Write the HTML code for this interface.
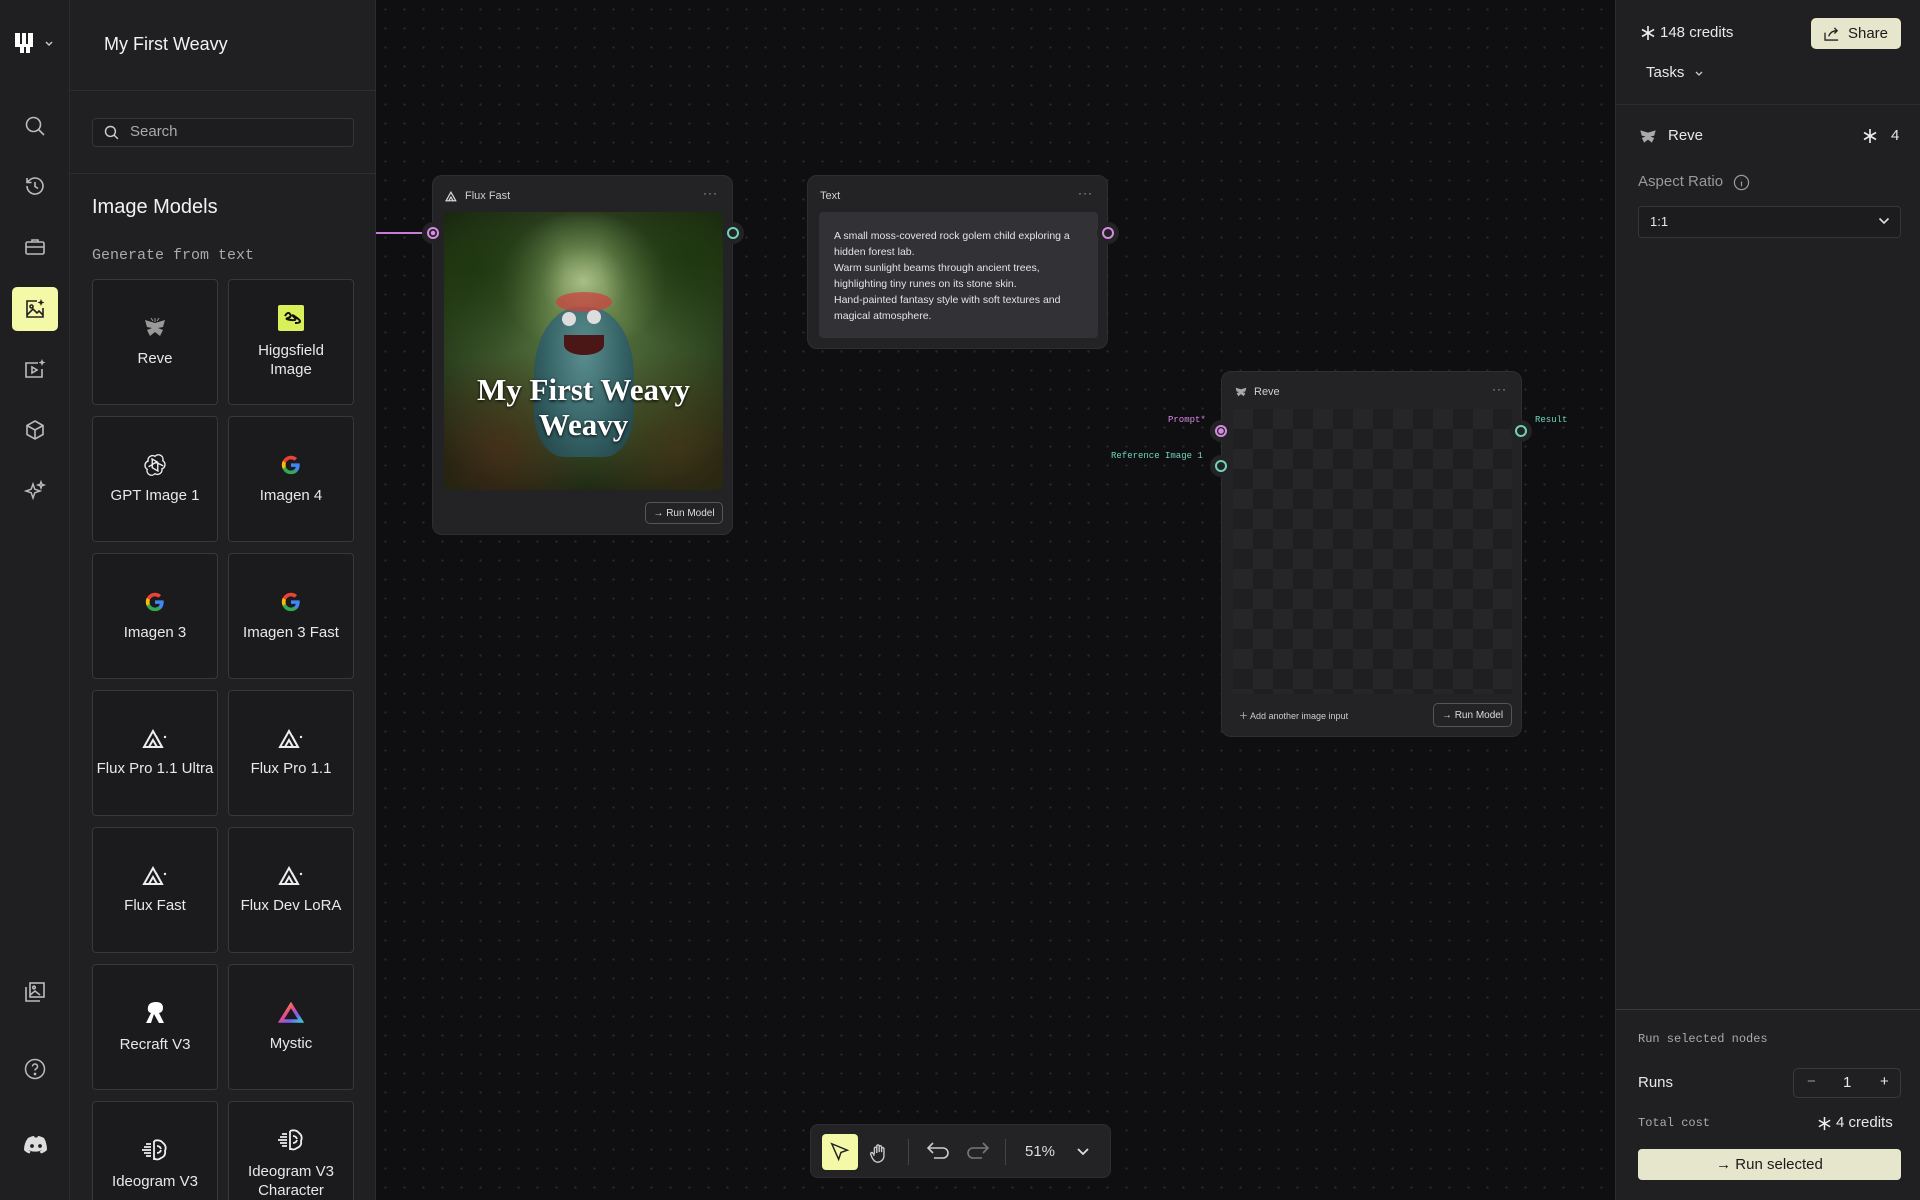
<!DOCTYPE html>
<html style="overflow:hidden;height:1200px"><head><meta charset="utf-8">
<style>
*{box-sizing:border-box;margin:0;padding:0}
html,body{width:1920px;height:1200px;overflow:hidden}
body{background:#0f0f12;font-family:"Liberation Sans",sans-serif;color:#e8e8e8;position:relative}
.abs{position:absolute}
.mono{font-family:"Liberation Mono",monospace}
#rail{left:0;top:0;width:70px;height:1200px;background:#1f1f22;border-right:1px solid #2c2c30;overflow:hidden}
#side{left:70px;top:0;width:306px;height:1200px;background:#202023;border-right:1px solid #2c2c30;overflow:hidden}
#canvas{left:376px;top:0;width:1239px;height:1200px;overflow:hidden;background-color:#0f0f12;background-image:radial-gradient(circle,#2a2a30 1px,transparent 1.3px);background-size:19px 19px}
#right{left:1615px;top:0;width:305px;height:1200px;background:#202023;border-left:1px solid #2c2c30;overflow:hidden}
.ri{position:absolute;left:23px;width:24px;height:24px}
.card{position:absolute;width:126px;height:126px;border:1px solid #38383c;border-radius:4px;background:#1b1b1e;display:flex;flex-direction:column;align-items:center;justify-content:center;font-size:15px;color:#e8e8e8;text-align:center;line-height:19px}
.card svg{margin-bottom:10px}
.node{position:absolute;background:#232326;border:1px solid #2e2e32;border-radius:10px}
.nh{position:absolute;top:14px;left:12px;font-size:11px;color:#cfcfcf;display:flex;align-items:center;gap:6px}
.dots{position:absolute;top:10px;right:14px;font-size:12px;color:#aaa;letter-spacing:1px}
.port{position:absolute;width:22px;height:22px;border-radius:50%;background:#232326}
.port i{position:absolute;left:5px;top:5px;width:12px;height:12px;border-radius:50%;border:2px solid}
.btn{position:absolute;border:1px solid #555;border-radius:5px;font-size:10px;color:#ddd;display:flex;align-items:center;justify-content:center}
</style></head><body>

<div id="rail" class="abs">
  <svg class="abs" style="left:14px;top:32px" width="40" height="22" viewBox="0 0 40 22"><path d="M1 1h5v11h2V1h4v11h2V1h5v14h-3v6h-4v-6h-2v6h-4v-6H1z" fill="#fff"/><path d="M32 10l3 3 3-3" stroke="#ccc" stroke-width="1.4" fill="none"/></svg>
  <svg class="ri" style="top:114px" viewBox="0 0 24 24" fill="none" stroke="#bbb" stroke-width="1.6"><circle cx="10.5" cy="10.5" r="7"/><path d="M15.5 15.5L21 21"/></svg>
  <svg class="ri" style="top:174px" viewBox="0 0 24 24" fill="none" stroke="#bbb" stroke-width="1.6"><path d="M4 12a8 8 0 1 0 2.5-5.8L4 8.5M4 4v4.5h4.5M12 8v4.5l3 2"/></svg>
  <svg class="ri" style="top:235px" viewBox="0 0 24 24" fill="none" stroke="#bbb" stroke-width="1.6"><rect x="3" y="7" width="18" height="12" rx="1.5"/><path d="M9 7V5h6v2M3 12h18"/></svg>
  <div class="abs" style="left:12px;top:287px;width:46px;height:44px;background:#f4f9a8;border-radius:5px"></div>
  <svg class="ri" style="top:297px" viewBox="0 0 24 24" fill="none" stroke="#222" stroke-width="1.6"><path d="M14 4H4v16h16V11"/><circle cx="8.5" cy="9.5" r="1.5"/><path d="M4 18l6-6 4 4 2-2 4 4"/><path d="M18 2l1 2.5 2.5 1-2.5 1-1 2.5-1-2.5-2.5-1 2.5-1z" fill="#222" stroke="none"/></svg>
  <svg class="ri" style="top:357px" viewBox="0 0 24 24" fill="none" stroke="#bbb" stroke-width="1.6"><path d="M15 6H3v14h16v-8"/><path d="M9 10v6l5-3z"/><path d="M19 2l1 2.5 2.5 1-2.5 1-1 2.5-1-2.5-2.5-1 2.5-1z" fill="#bbb" stroke="none"/></svg>
  <svg class="ri" style="top:418px" viewBox="0 0 24 24" fill="none" stroke="#bbb" stroke-width="1.6"><path d="M12 3l8 4.5v9L12 21l-8-4.5v-9zM4 7.5l8 4.5 8-4.5M12 12v9"/></svg>
  <svg class="ri" style="top:479px" viewBox="0 0 24 24" fill="none" stroke="#bbb" stroke-width="1.5"><path d="M10 5l1.8 5.2L17 12l-5.2 1.8L10 19l-1.8-5.2L3 12l5.2-1.8zM18 3l.8 2.2L21 6l-2.2.8L18 9l-.8-2.2L15 6l2.2-.8z"/></svg>
  <svg class="ri" style="top:980px" viewBox="0 0 24 24" fill="none" stroke="#bbb" stroke-width="1.6"><rect x="7" y="3" width="14" height="14"/><path d="M3 7v14h14"/><circle cx="11" cy="7.5" r="1.3"/><path d="M7 15l5-4 5 4"/></svg>
  <svg class="ri" style="top:1057px" viewBox="0 0 24 24" fill="none" stroke="#bbb" stroke-width="1.5"><circle cx="12" cy="12" r="9.5"/><path d="M9.5 9.5a2.5 2.5 0 1 1 3.5 2.3c-.7.3-1 .9-1 1.7"/><circle cx="12" cy="17" r=".6" fill="#bbb"/></svg>
  <svg class="ri" style="top:1133px;width:26px" viewBox="0 0 26 20"><path d="M5 3q4-2 6-2l.8 1.5h2.4L15 1q2 0 6 2 3 5 3 12-2.5 2.5-6 3.5l-1.3-2q1.5-.6 2.5-1.4-7 3-14 0 1 .8 2.5 1.4L6.4 18.5Q3 17.5 1 15 1 8 5 3z" fill="#ddd"/><circle cx="9" cy="11" r="1.9" fill="#1f1f22"/><circle cx="17" cy="11" r="1.9" fill="#1f1f22"/></svg>
</div>

<div id="side" class="abs">
  <div class="abs" style="left:34px;top:34px;font-size:18px;color:#f2f2f2">My First Weavy</div>
  <div class="abs" style="left:0;top:90px;width:306px;border-top:1px solid #2e2e32"></div>
  <div class="abs" style="left:22px;top:118px;width:262px;height:29px;border:1px solid #35353a;border-radius:4px;background:#1d1d20"></div>
  <svg class="abs" style="left:33px;top:124px" width="17" height="17" viewBox="0 0 24 24" fill="none" stroke="#ccc" stroke-width="2"><circle cx="10.5" cy="10.5" r="7"/><path d="M15.5 15.5L21 21"/></svg>
  <div class="abs" style="left:60px;top:123px;font-size:15px;color:#aaa">Search</div>
  <div class="abs" style="left:0;top:173px;width:306px;border-top:1px solid #2e2e32"></div>
  <div class="abs" style="left:22px;top:196px;font-size:20px;color:#f2f2f2">Image Models</div>
  <div class="abs mono" style="left:22px;top:247px;font-size:15px;color:#aaa">Generate from text</div>

  <div class="card" style="left:22px;top:279px"><svg width="26" height="22" viewBox="0 0 26 22"><path d="M13 6L3 3l2 7 5 1-5 2 3 6 5-4 5 4 3-6-5-2 5-1 2-7z" fill="#999"/><path d="M9 1l2 3M17 1l-2 3M13 1v4" stroke="#999" stroke-width="1"/></svg>Reve</div>
  <div class="card" style="left:158px;top:279px"><svg width="26" height="26" viewBox="0 0 26 26"><rect width="26" height="26" rx="2" fill="#d9f05a"/><path d="M7 11q3-5 5-2t-2 4 3 2 3-3 3 1-2 5" stroke="#111" stroke-width="2" fill="none"/></svg>Higgsfield<br>Image</div>

  <div class="card" style="left:22px;top:416px"><svg width="22" height="22" viewBox="0 0 24 24" fill="none" stroke="#eee" stroke-width="1.5"><path d="M12 2.5a5 5 0 0 1 8.5 4.8 5 5 0 0 1-1 9A5 5 0 0 1 12 21.5a5 5 0 0 1-8.5-4.8 5 5 0 0 1 1-9A5 5 0 0 1 12 2.5zM9 5v10l7 4M15 19V9L8 5M5 14l8-5 8 4"/></svg>GPT Image 1</div>
  <div class="card" style="left:158px;top:416px"><svg width="22" height="22" viewBox="0 0 24 24"><path d="M21.5 12.2c0-.7-.1-1.4-.2-2H12v3.9h5.3a4.6 4.6 0 0 1-2 3v2.5h3.2c1.9-1.7 3-4.3 3-7.4z" fill="#4285f4"/><path d="M12 22c2.7 0 5-.9 6.6-2.4l-3.2-2.5c-.9.6-2 1-3.4 1-2.6 0-4.8-1.8-5.6-4.1H3.1v2.6A10 10 0 0 0 12 22z" fill="#34a853"/><path d="M6.4 14c-.2-.6-.3-1.3-.3-2s.1-1.4.3-2V7.4H3.1a10 10 0 0 0 0 9z" fill="#fbbc05"/><path d="M12 5.9c1.5 0 2.8.5 3.8 1.5l2.9-2.9A10 10 0 0 0 3.1 7.4L6.4 10C7.2 7.7 9.4 5.9 12 5.9z" fill="#ea4335"/></svg>Imagen 4</div>

  <div class="card" style="left:22px;top:553px"><svg width="22" height="22" viewBox="0 0 24 24"><path d="M21.5 12.2c0-.7-.1-1.4-.2-2H12v3.9h5.3a4.6 4.6 0 0 1-2 3v2.5h3.2c1.9-1.7 3-4.3 3-7.4z" fill="#4285f4"/><path d="M12 22c2.7 0 5-.9 6.6-2.4l-3.2-2.5c-.9.6-2 1-3.4 1-2.6 0-4.8-1.8-5.6-4.1H3.1v2.6A10 10 0 0 0 12 22z" fill="#34a853"/><path d="M6.4 14c-.2-.6-.3-1.3-.3-2s.1-1.4.3-2V7.4H3.1a10 10 0 0 0 0 9z" fill="#fbbc05"/><path d="M12 5.9c1.5 0 2.8.5 3.8 1.5l2.9-2.9A10 10 0 0 0 3.1 7.4L6.4 10C7.2 7.7 9.4 5.9 12 5.9z" fill="#ea4335"/></svg>Imagen 3</div>
  <div class="card" style="left:158px;top:553px"><svg width="22" height="22" viewBox="0 0 24 24"><path d="M21.5 12.2c0-.7-.1-1.4-.2-2H12v3.9h5.3a4.6 4.6 0 0 1-2 3v2.5h3.2c1.9-1.7 3-4.3 3-7.4z" fill="#4285f4"/><path d="M12 22c2.7 0 5-.9 6.6-2.4l-3.2-2.5c-.9.6-2 1-3.4 1-2.6 0-4.8-1.8-5.6-4.1H3.1v2.6A10 10 0 0 0 12 22z" fill="#34a853"/><path d="M6.4 14c-.2-.6-.3-1.3-.3-2s.1-1.4.3-2V7.4H3.1a10 10 0 0 0 0 9z" fill="#fbbc05"/><path d="M12 5.9c1.5 0 2.8.5 3.8 1.5l2.9-2.9A10 10 0 0 0 3.1 7.4L6.4 10C7.2 7.7 9.4 5.9 12 5.9z" fill="#ea4335"/></svg>Imagen 3 Fast</div>

  <div class="card" style="left:22px;top:690px"><svg width="26" height="20" viewBox="0 0 26 20" fill="none" stroke="#eee" stroke-width="2"><path d="M2 18L11 2l9 16zM7 18l4-7 4 7M14 7l6 11"/><circle cx="23" cy="8" r="1.2" fill="#eee" stroke="none"/></svg>Flux Pro 1.1 Ultra</div>
  <div class="card" style="left:158px;top:690px"><svg width="26" height="20" viewBox="0 0 26 20" fill="none" stroke="#eee" stroke-width="2"><path d="M2 18L11 2l9 16zM7 18l4-7 4 7M14 7l6 11"/><circle cx="23" cy="8" r="1.2" fill="#eee" stroke="none"/></svg>Flux Pro 1.1</div>

  <div class="card" style="left:22px;top:827px"><svg width="26" height="20" viewBox="0 0 26 20" fill="none" stroke="#eee" stroke-width="2"><path d="M2 18L11 2l9 16zM7 18l4-7 4 7M14 7l6 11"/><circle cx="23" cy="8" r="1.2" fill="#eee" stroke="none"/></svg>Flux Fast</div>
  <div class="card" style="left:158px;top:827px"><svg width="26" height="20" viewBox="0 0 26 20" fill="none" stroke="#eee" stroke-width="2"><path d="M2 18L11 2l9 16zM7 18l4-7 4 7M14 7l6 11"/><circle cx="23" cy="8" r="1.2" fill="#eee" stroke="none"/></svg>Flux Dev LoRA</div>

  <div class="card" style="left:22px;top:964px"><svg width="22" height="24" viewBox="0 0 22 24"><path d="M2 22L7 12Q3 11 4 6q1-5 8-5 7 0 7 6 0 4-4 5l5 10h-5l-5-9-3 9z" fill="#fff"/></svg>Recraft V3</div>
  <div class="card" style="left:158px;top:964px"><svg width="26" height="22" viewBox="0 0 26 22"><defs><linearGradient id="mg" x1="0" x2="1" y1="0" y2="1"><stop offset="0" stop-color="#f5a623"/><stop offset=".4" stop-color="#e94b8a"/><stop offset=".7" stop-color="#7b5cf5"/><stop offset="1" stop-color="#3ec1d3"/></linearGradient></defs><path d="M13 3L23 19H3z" fill="none" stroke="url(#mg)" stroke-width="3.5"/></svg>Mystic</div>

  <div class="card" style="left:22px;top:1101px;height:110px;justify-content:flex-start;padding-top:36px"><svg width="26" height="24" viewBox="0 0 26 24" fill="none" stroke="#eee" stroke-width="1.8"><path d="M12 3q6-2 9 2 4 3 2 8 1 5-4 7-4 3-7 0M12 3v19M15 8q3 0 4 3M15 15q3 0 4-3M2 9h7M0 12h9M2 15h7M4 6h5M4 18h5"/></svg>Ideogram V3</div>
  <div class="card" style="left:158px;top:1101px;height:110px;justify-content:flex-start;padding-top:26px"><svg width="26" height="24" viewBox="0 0 26 24" fill="none" stroke="#eee" stroke-width="1.8"><path d="M12 3q6-2 9 2 4 3 2 8 1 5-4 7-4 3-7 0M12 3v19M15 8q3 0 4 3M15 15q3 0 4-3M2 9h7M0 12h9M2 15h7M4 6h5M4 18h5"/></svg>Ideogram V3<br>Character</div>
</div>

<div id="canvas" class="abs">
  <div class="abs" style="left:0;top:232px;width:56px;height:1.5px;background:#c77dd8"></div>

  <div class="node" style="left:56px;top:175px;width:301px;height:360px">
    <div class="nh"><svg width="14" height="11" viewBox="0 0 26 20" fill="none" stroke="#ddd" stroke-width="2.2"><path d="M2 18L11 2l9 16zM7 18l4-7 4 7M14 7l6 11"/></svg>Flux Fast</div>
    <div class="dots">···</div>
    <div class="abs" style="left:11px;top:36px;width:279px;height:278px;border-radius:3px;overflow:hidden;background:radial-gradient(ellipse 35% 30% at 50% 25%,#a9bf86 0%,rgba(130,160,95,.5) 45%,transparent 85%),radial-gradient(ellipse 70% 60% at 50% 45%,#5d7a42,#324a24 60%,#18210f 100%)">
      <div class="abs" style="left:0;top:0;width:279px;height:278px;background:radial-gradient(circle at 10% 20%,rgba(30,55,15,.9) 0,transparent 28%),radial-gradient(circle at 90% 15%,rgba(30,55,15,.9) 0,transparent 28%),radial-gradient(circle at 20% 85%,rgba(80,45,25,.7) 0,transparent 30%),radial-gradient(circle at 85% 85%,rgba(80,55,25,.6) 0,transparent 30%)"></div>
      <div class="abs" style="left:90px;top:95px;width:100px;height:150px;border-radius:45% 45% 30% 30%;background:radial-gradient(ellipse at 50% 30%,#5a8e8e,#325e62 60%,#1f3f42)"></div>
      <div class="abs" style="left:112px;top:80px;width:56px;height:20px;border-radius:50%;background:#c8443f;opacity:.75"></div>
      <div class="abs" style="left:118px;top:100px;width:14px;height:14px;border-radius:50%;background:#ddd"></div>
      <div class="abs" style="left:143px;top:98px;width:14px;height:14px;border-radius:50%;background:#ddd"></div>
      <div class="abs" style="left:120px;top:123px;width:40px;height:20px;border-radius:0 0 50% 50%;background:#4a1616"></div>
      <div class="abs" style="left:0;top:160px;width:279px;text-align:center;font-family:'Liberation Serif',serif;font-weight:bold;font-size:31px;line-height:35px;color:#fff;text-shadow:0 1px 3px #000">My First Weavy<br>Weavy</div>
    </div>
    <div class="btn" style="left:212px;top:326px;width:78px;height:22px">→ Run Model</div>
  </div>
  <div class="port" style="left:46px;top:222px"><i style="border-color:#d48be0;background:radial-gradient(circle,#d48be0 2px,transparent 2.5px)"></i></div>
  <div class="port" style="left:346px;top:222px"><i style="border-color:#6fd3b8"></i></div>

  <div class="node" style="left:431px;top:175px;width:301px;height:174px">
    <div class="nh">Text</div>
    <div class="dots">···</div>
    <div class="abs" style="left:11px;top:36px;width:279px;height:126px;border-radius:4px;background:#323236;padding:16px 15px;font-size:10.5px;line-height:16px;color:#e4e4e4">A small moss-covered rock golem child exploring a hidden forest lab.<br>Warm sunlight beams through ancient trees, highlighting tiny runes on its stone skin.<br>Hand-painted fantasy style with soft textures and magical atmosphere.</div>
  </div>
  <div class="port" style="left:721px;top:222px"><i style="border-color:#d48be0"></i></div>

  <div class="node" style="left:845px;top:371px;width:301px;height:366px">
    <div class="nh"><svg width="14" height="12" viewBox="0 0 26 22"><path d="M13 6L3 3l2 7 5 1-5 2 3 6 5-4 5 4 3-6-5-2 5-1 2-7z" fill="#aaa"/></svg>Reve</div>
    <div class="dots">···</div>
    <div class="abs" style="left:11px;top:37px;width:279px;height:285px;background-color:#262629;background-image:linear-gradient(45deg,#1f1f22 25%,transparent 25%,transparent 75%,#1f1f22 75%),linear-gradient(45deg,#1f1f22 25%,transparent 25%,transparent 75%,#1f1f22 75%);background-size:40px 40px;background-position:0 0,20px 20px"></div>
    <div class="abs" style="left:17px;top:337px;font-size:9px;color:#ccc">＋ Add another image input</div>
    <div class="btn" style="left:211px;top:331px;width:79px;height:24px">→ Run Model</div>
  </div>
  <div class="port" style="left:834px;top:420px"><i style="border-color:#d48be0;background:radial-gradient(circle,#d48be0 2.5px,transparent 3px)"></i></div>
  <div class="port" style="left:834px;top:455px"><i style="border-color:#6fd3b8"></i></div>
  <div class="port" style="left:1134px;top:420px"><i style="border-color:#6fd3b8"></i></div>
  <div class="abs mono" style="left:792px;top:415px;font-size:9px;color:#d48be0">Prompt*</div>
  <div class="abs mono" style="left:735px;top:451px;font-size:9px;color:#6fd3b8">Reference Image 1</div>
  <div class="abs mono" style="left:1159px;top:415px;font-size:9px;color:#6fd3b8">Result</div>

  <div class="abs" style="left:434px;top:1124px;width:301px;height:54px;background:#232326;border:1px solid #2e2e32;border-radius:8px">
    <div class="abs" style="left:11px;top:9px;width:36px;height:36px;background:#f4f9a8;border-radius:4px"></div>
    <svg class="abs" style="left:18px;top:16px" width="22" height="22" viewBox="0 0 24 24" fill="none" stroke="#222" stroke-width="1.6"><path d="M3 3l17 7-7 2.5L10.5 20z"/></svg>
    <svg class="abs" style="left:57px;top:16px" width="22" height="24" viewBox="0 0 24 24" fill="none" stroke="#ccc" stroke-width="1.5"><path d="M7 13V7a1.3 1.3 0 0 1 2.6 0v5M9.6 11V4.5a1.3 1.3 0 0 1 2.6 0V11M12.2 11V5.5a1.3 1.3 0 0 1 2.6 0V11M14.8 11V7.5a1.3 1.3 0 0 1 2.6 0V15a7 7 0 0 1-7 7c-3 0-4.5-2-6-5L3 13.5a1.3 1.3 0 0 1 2.3-1.3L7 15"/></svg>
    <div class="abs" style="left:97px;top:14px;width:1px;height:26px;background:#444"></div>
    <svg class="abs" style="left:114px;top:15px" width="26" height="24" viewBox="0 0 26 24" fill="none" stroke="#ccc" stroke-width="1.6"><path d="M8 3L3 8l5 5M3 8h15a5 5 0 0 1 0 10h-9"/></svg>
    <svg class="abs" style="left:154px;top:15px" width="26" height="24" viewBox="0 0 26 24" fill="none" stroke="#777" stroke-width="1.6"><path d="M18 3l5 5-5 5M23 8H8a5 5 0 0 0 0 10h9"/></svg>
    <div class="abs" style="left:194px;top:14px;width:1px;height:26px;background:#444"></div>
    <div class="abs" style="left:214px;top:18px;font-size:15px;color:#ddd">51%</div>
    <svg class="abs" style="left:265px;top:21px" width="14" height="12" viewBox="0 0 14 12" fill="none" stroke="#ddd" stroke-width="1.8"><path d="M2 3l5 5 5-5"/></svg>
  </div>
</div>

<div id="right" class="abs">
  <svg class="abs" style="left:24px;top:25px" width="16" height="16" viewBox="0 0 16 16" stroke="#eee" stroke-width="1.6"><path d="M8 1v14M2 4.5l12 7M2 11.5l12-7"/></svg>
  <div class="abs" style="left:44px;top:24px;font-size:15px;color:#e8e8e8">148 credits</div>
  <div class="abs" style="left:195px;top:18px;width:90px;height:31px;background:#e6e6cd;border-radius:5px;color:#1a1a1a;font-size:15px;display:flex;align-items:center;justify-content:center;gap:7px"><svg width="17" height="15" viewBox="0 0 18 16" fill="none" stroke="#222" stroke-width="1.4"><path d="M1 7v8h14M5 11q2-6 9-6M11 2l3 3-3 3"/></svg>Share</div>
  <div class="abs" style="left:30px;top:64px;font-size:15px;color:#e8e8e8">Tasks</div>
  <svg class="abs" style="left:78px;top:70px" width="10" height="8" viewBox="0 0 10 8" fill="none" stroke="#ccc" stroke-width="1.3"><path d="M2 2l3 3 3-3"/></svg>
  <div class="abs" style="left:0;top:104px;width:305px;border-top:1px solid #2c2c30"></div>
  <svg class="abs" style="left:22px;top:128px" width="20" height="17" viewBox="0 0 26 22"><path d="M13 6L3 3l2 7 5 1-5 2 3 6 5-4 5 4 3-6-5-2 5-1 2-7z" fill="#aaa"/></svg>
  <div class="abs" style="left:52px;top:127px;font-size:15px;color:#e8e8e8">Reve</div>
  <svg class="abs" style="left:246px;top:128px" width="16" height="16" viewBox="0 0 16 16" stroke="#eee" stroke-width="1.6"><path d="M8 1v14M2 4.5l12 7M2 11.5l12-7"/></svg>
  <div class="abs" style="left:275px;top:127px;font-size:15px;color:#e8e8e8">4</div>
  <div class="abs" style="left:22px;top:173px;font-size:15px;color:#999">Aspect Ratio</div>
  <svg class="abs" style="left:117px;top:174px" width="17" height="17" viewBox="0 0 18 18" fill="none" stroke="#999" stroke-width="1.3"><circle cx="9" cy="9" r="7.5"/><path d="M9 8v5M9 5.2v.1"/></svg>
  <div class="abs" style="left:22px;top:206px;width:263px;height:32px;border:1px solid #35353a;border-radius:4px;background:#1c1c1f"></div>
  <div class="abs" style="left:34px;top:214px;font-size:13px;color:#e8e8e8">1:1</div>
  <svg class="abs" style="left:262px;top:216px" width="12" height="10" viewBox="0 0 12 10" fill="none" stroke="#ddd" stroke-width="1.6"><path d="M1.5 2.5l4.5 4.5 4.5-4.5"/></svg>

  <div class="abs" style="left:0;top:1009px;width:305px;border-top:1.5px solid #3a3a3e"></div>
  <div class="abs mono" style="left:22px;top:1032px;font-size:12px;color:#aaa">Run selected nodes</div>
  <div class="abs" style="left:22px;top:1074px;font-size:15px;color:#e8e8e8">Runs</div>
  <div class="abs" style="left:177px;top:1068px;width:108px;height:30px;border:1px solid #3a3a3e;border-radius:5px;font-size:15px;color:#e8e8e8">
    <span class="abs" style="left:13px;top:4px;color:#999">−</span><span class="abs" style="left:49px;top:5px">1</span><span class="abs" style="left:86px;top:4px">+</span>
  </div>
  <div class="abs mono" style="left:22px;top:1116px;font-size:12px;color:#aaa">Total cost</div>
  <svg class="abs" style="left:201px;top:1116px" width="15" height="15" viewBox="0 0 16 16" stroke="#eee" stroke-width="1.6"><path d="M8 1v14M2 4.5l12 7M2 11.5l12-7"/></svg>
  <div class="abs" style="left:220px;top:1114px;font-size:15px;color:#e8e8e8">4 credits</div>
  <div class="abs" style="left:22px;top:1149px;width:263px;height:31px;background:#e6e6cd;border-radius:4px;color:#1a1a1a;font-size:15px;display:flex;align-items:center;justify-content:center;gap:7px">→ Run selected</div>
</div>
</body></html>
